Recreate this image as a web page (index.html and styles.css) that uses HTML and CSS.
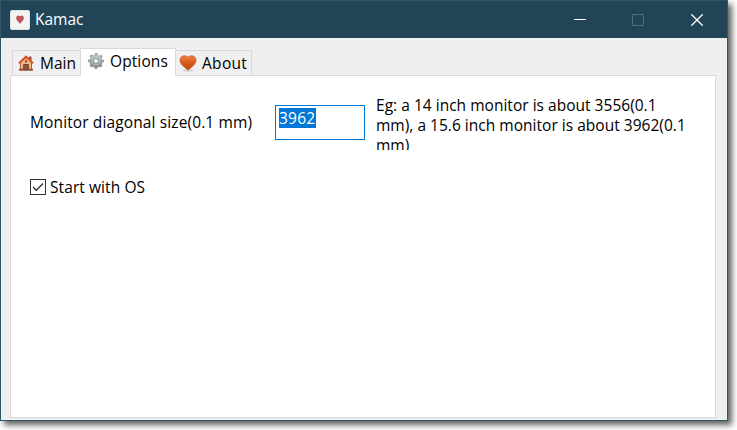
FILE: index.html
```html
<!DOCTYPE html>
<html lang="en">
<head>
<meta charset="utf-8">
<title>Kamac</title>
<link rel="stylesheet" href="styles.css">
</head>
<body>
<main class="window">
  <header class="titlebar">
    <span class="app-icon"><svg width="8" height="9" viewBox="0 0 8 9"><path d="M4 8.700.7 5C-.5 2.500.5.300 2.500.4L4 1.200 5.500.4C7.500.3 8.500 2.500 7.300 5Z" fill="#b8565a"/></svg></span>
    <span class="title">Kamac</span>
    <div class="controls">
      <svg width="12" height="12" viewBox="0 0 12 12"><path d="M0 5.500h12" stroke="#fff"/></svg>
      <svg width="12" height="12" viewBox="0 0 12 12"><path d="M.5.5h11v11H.5z" fill="none" stroke="#4b6f7f"/></svg>
      <svg width="12" height="12" viewBox="0 0 12 12"><path d="m.3.3 11.400 11.400M11.700.3.3 11.700" stroke="#fff" stroke-width="1.300"/></svg>
    </div>
  </header>
  <nav class="tabs">
    <div class="tab tab-main">
      <svg width="16" height="16" viewBox="0 0 16 16">
        <path d="M11 1.500h2.500v5H11z" fill="#a94b28"/>
        <path d="M2.500 7 8 2.500 13.500 7v8h-11z" fill="#e8b987" stroke="#9b4826" stroke-width=".8"/>
        <path d="M5.700 15V9.500h4.600V15z" fill="#96543a" stroke="#70301c" stroke-width=".9"/>
        <path d="M7 5.500h2v2H7z" fill="#70402d"/>
        <path d="M1 8.200 8 1.700l7 6.500" fill="none" stroke="#d9512b" stroke-width="2"/>
        <path d="M1 14.800h4M11 14.800h4" stroke="#a6532e" stroke-width="2"/>
      </svg>
      <span>Main</span>
    </div>
    <div class="tab tab-options active">
      <svg width="16" height="16" viewBox="0 0 16 16">
        <defs><linearGradient id="steel" x2="0" y2="1"><stop stop-color="#b4bfc0"/><stop offset="1" stop-color="#84908f"/></linearGradient></defs>
        <circle cx="8" cy="8" r="6.900" fill="none" stroke="#8d9999" stroke-width="2" stroke-dasharray="2.700 2.719" stroke-dashoffset="1.350"/>
        <circle cx="8" cy="8" r="4.500" fill="none" stroke="url(#steel)" stroke-width="4.200"/>
        <circle cx="8" cy="8" r="4" fill="none" stroke="#c0caca" stroke-width=".8"/>
        <circle cx="8" cy="8" r="2.300" fill="#fff" stroke="#7c8888" stroke-width=".8"/>
      </svg>
      <span>Options</span>
    </div>
    <div class="tab tab-about">
      <svg width="18" height="17" viewBox="0 0 18 17">
        <defs><linearGradient id="ember" x2="0" y2="1"><stop stop-color="#e98445"/><stop offset=".5" stop-color="#d75a19"/><stop offset="1" stop-color="#c3440b"/></linearGradient></defs>
        <ellipse cx="9" cy="15.500" rx="5" ry="1.100" fill="#cfcfcf"/>
        <path d="M9 15.300C7 13 1 9.800 1 5.200 1 .3 6.500-.3 9 2.200c2.500-2.500 8-1.900 8 3C17 9.800 11 13 9 15.300Z" fill="url(#ember)" stroke="#c24a14" stroke-width=".6"/>
      </svg>
      <span>About</span>
    </div>
  </nav>
  <section class="panel">
    <div class="row">
      <label class="size-label" for="size">Monitor diagonal size(0.1 mm)</label>
      <div class="field" id="size"><span class="selection">3962</span></div>
      <p class="hint"><span class="hint-a">Eg: a 14 inch monitor is about 3556(0.1</span><br><span class="hint-b">mm), a 15.6 inch monitor is about 3962(0.1</span><br>mm)</p>
    </div>
    <div class="check-row">
      <span class="checkbox"><svg width="14" height="14" viewBox="0 0 14 14"><path d="m2 7 3.300 3.300L12 3.500" fill="none" stroke="#333" stroke-width="1.300"/></svg></span>
      <span class="check-label">Start with OS</span>
    </div>
  </section>
</main>
</body>
</html>
```
FILE: styles.css
```css
* { box-sizing: border-box; }
html, body { height: 430px; }
body {
  margin: 0;
  background: #fff;
  overflow: hidden;
  color: #000;
  font: 15.5px/20px "Open Sans", "Noto Sans", sans-serif;
  white-space: nowrap;
}
svg { display: block; flex: none; }
.window {
  width: 728px;
  height: 421px;
  border: 1px solid #2d5769;
  background: #efefef;
  box-shadow: 4px 4px 6px rgba(0, 0, 0, .62);
}
.titlebar {
  height: 37px;
  display: flex;
  align-items: center;
  background: #214556;
  color: #fff;
  padding: 0 24px 0 9px;
}
.app-icon {
  width: 20px;
  height: 20px;
  display: grid;
  place-items: center;
  background: #f3f3f3;
  border: 1px solid #dce2e4;
  border-radius: 2px;
}
.title { margin: 0 0 2px 5px; }
.controls { margin-left: auto; display: flex; gap: 47px; }
.controls svg:first-child { margin-right: -1px; }
.tabs {
  height: 38px;
  padding: 10px 0 0 11px;
  display: flex;
  align-items: flex-end;
}
.tab {
  height: 26px;
  display: flex;
  align-items: center;
  border: 1px solid #d9d9d9;
  background: #f0f0f0;
}
.tab-main { width: 68px; padding-left: 5px; gap: 6px; border-right: 0; }
.tab-options { width: 96px; padding-left: 7px; gap: 6px; letter-spacing: .1px; }
.tab-options svg, .tab-options span { margin-bottom: 2px; }
.tab-about { width: 76px; padding-left: 3px; gap: 5px; border-left: 0; letter-spacing: .3px; }
.active { height: 28px; background: #fff; border-bottom-color: #fff; position: relative; }
.panel {
  width: 706px;
  height: 343px;
  margin: -1px 0 0 9px;
  border: 1px solid #d9d9d9;
  background: #fff;
  padding: 19px;
}
.row { display: flex; height: 55px; }
.size-label { width: 245px; padding-top: 17px; letter-spacing: .12px; }
.field {
  width: 90px;
  height: 35px;
  margin-top: 10px;
  border: 1px solid #0078d7;
  padding: 2px 3px;
}
.selection { display: block; width: 37px; height: 20px; background: #0078d7; color: #fff; letter-spacing: .2px; }
.hint { margin: 0 0 0 11px; width: 315px; height: 55px; overflow: hidden; }
.hint-a, .hint-b { letter-spacing: .02px; }
.check-row { display: flex; align-items: center; height: 20px; margin-top: 27px; gap: 4px; }
.check-label { letter-spacing: .08px; }
.checkbox { width: 16px; height: 16px; border: 1px solid #333; }
```
